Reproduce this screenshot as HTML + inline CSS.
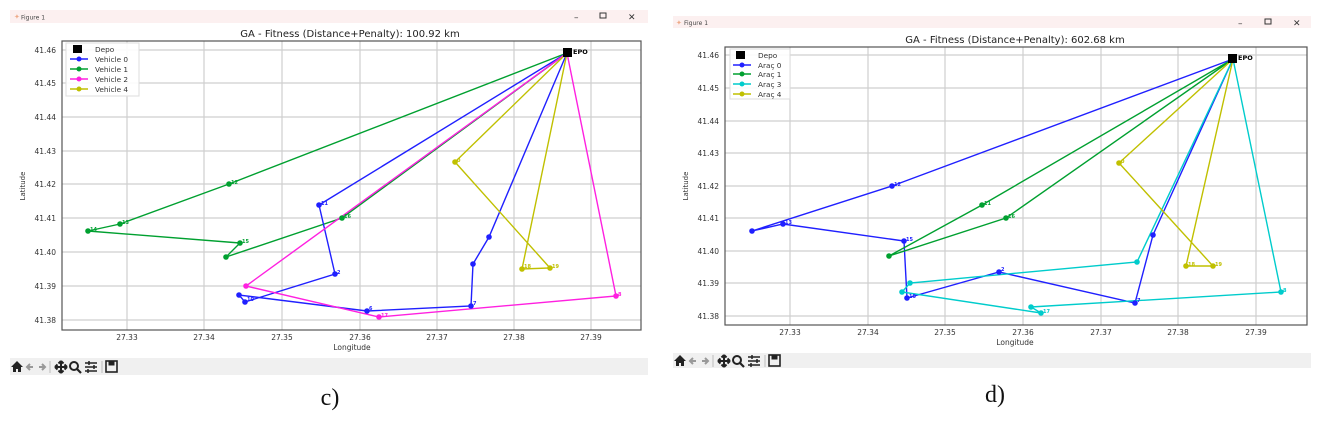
<!DOCTYPE html>
<html><head><meta charset="utf-8"><style>
html,body{margin:0;padding:0;background:#fff;}
svg{display:block;font-family:"DejaVu Sans","Liberation Sans",sans-serif;}
</style></head><body>
<svg width="1321" height="421" viewBox="0 0 1321 421" xmlns="http://www.w3.org/2000/svg">
<defs>
<g id="tb">
 <path d="M0 8 L6 2 L12 8 L10 8 L10 13 L7 13 L7 10 L5 10 L5 13 L2 13 L2 8Z" fill="#222"/>
 <path d="M22 8 L16 8 M19 5 L16 8 L19 11" stroke="#999" stroke-width="2" fill="none"/>
 <path d="M28 8 L34 8 M31 5 L34 8 L31 11" stroke="#999" stroke-width="2" fill="none"/>
 <line x1="39" y1="2" x2="39" y2="14" stroke="#bbb"/>
 <path d="M44 8 H56 M50 2 V14 M44 8 l2.5 -2.5 M44 8 l2.5 2.5 M56 8 l-2.5 -2.5 M56 8 l-2.5 2.5 M50 2 l-2.5 2.5 M50 2 l2.5 2.5 M50 14 l-2.5 -2.5 M50 14 l2.5 -2.5" stroke="#222" stroke-width="2" fill="none"/>
 <circle cx="63" cy="7" r="4" stroke="#222" stroke-width="2" fill="none"/>
 <line x1="66" y1="10" x2="70" y2="14" stroke="#222" stroke-width="2.2"/>
 <path d="M74 4 H86 M74 8 H86 M74 12 H86" stroke="#222" stroke-width="1.5"/>
 <path d="M78 2 V6 M83 6 V10 M77 10 V14" stroke="#222" stroke-width="1.5"/>
 <line x1="91" y1="2" x2="91" y2="14" stroke="#bbb"/>
 <rect x="95" y="2" width="11" height="11" fill="none" stroke="#222" stroke-width="1.6"/>
 <rect x="97.5" y="2.5" width="6" height="4" fill="#222"/>
</g>
</defs>

<!-- ================= LEFT PANEL ================= -->
<rect x="10" y="10" width="638" height="13" fill="#fcf0f0"/>
<text x="14" y="19" font-size="7" fill="#ea8">✦</text>
<text x="21" y="19.5" font-size="6" fill="#444">Figure 1</text>
<text x="574" y="20" font-size="9" fill="#333">–</text>
<rect x="600" y="13" width="6" height="5" fill="none" stroke="#333"/>
<text x="628" y="20" font-size="9" fill="#333">✕</text>

<text x="350" y="37" font-size="10" text-anchor="middle" fill="#222">GA - Fitness (Distance+Penalty): 100.92 km</text>
<g stroke="#cfcfcf" stroke-width="1.2">
 <line x1="127" y1="41" x2="127" y2="330"/><line x1="204" y1="41" x2="204" y2="330"/><line x1="282" y1="41" x2="282" y2="330"/><line x1="360" y1="41" x2="360" y2="330"/><line x1="437" y1="41" x2="437" y2="330"/><line x1="514" y1="41" x2="514" y2="330"/><line x1="591" y1="41" x2="591" y2="330"/>
 <line x1="62" y1="50" x2="641" y2="50"/><line x1="62" y1="83" x2="641" y2="83"/><line x1="62" y1="117" x2="641" y2="117"/><line x1="62" y1="151" x2="641" y2="151"/><line x1="62" y1="184" x2="641" y2="184"/><line x1="62" y1="218" x2="641" y2="218"/><line x1="62" y1="252" x2="641" y2="252"/><line x1="62" y1="286" x2="641" y2="286"/><line x1="62" y1="320" x2="641" y2="320"/>
</g>
<rect x="62" y="41" width="579" height="289" fill="none" stroke="#555" stroke-width="1.2"/>
<g font-size="7.5" fill="#333" text-anchor="end">
 <text x="56" y="53">41.46</text><text x="56" y="86">41.45</text><text x="56" y="120">41.44</text><text x="56" y="154">41.43</text><text x="56" y="187">41.42</text><text x="56" y="221">41.41</text><text x="56" y="255">41.40</text><text x="56" y="289">41.39</text><text x="56" y="323">41.38</text>
</g>
<g font-size="7.5" fill="#333" text-anchor="middle">
 <text x="127" y="340">27.33</text><text x="204" y="340">27.34</text><text x="282" y="340">27.35</text><text x="360" y="340">27.36</text><text x="437" y="340">27.37</text><text x="514" y="340">27.38</text><text x="591" y="340">27.39</text>
 <text x="352" y="350">Longitude</text>
</g>
<text transform="translate(25,186) rotate(-90)" font-size="7" fill="#333" text-anchor="middle">Latitude</text>

<g fill="none" stroke-width="1.4">
 <polyline stroke="#00a030" points="567,53 229,184 120,224 88,231 240,243 226,257 342,218 567,53"/>
 <polyline stroke="#2020ff" points="567,53 319,205 335,274 245,302 239,295 367,311 471,306 473,264 489,237 567,53"/>
 <polyline stroke="#ff20e0" points="567,53 246,286 379,317 616,296 567,53"/>
 <polyline stroke="#c0c000" points="567,53 455,162 550,268 522,269 567,53"/>
</g>
<g stroke="none">
 <g fill="#00a030"><circle cx="229" cy="184" r="2.8"/><circle cx="120" cy="224" r="2.8"/><circle cx="88" cy="231" r="2.8"/><circle cx="240" cy="243" r="2.8"/><circle cx="226" cy="257" r="2.8"/><circle cx="342" cy="218" r="2.8"/></g>
 <g fill="#2020ff"><circle cx="319" cy="205" r="2.8"/><circle cx="335" cy="274" r="2.8"/><circle cx="245" cy="302" r="2.8"/><circle cx="239" cy="295" r="2.8"/><circle cx="367" cy="311" r="2.8"/><circle cx="471" cy="306" r="2.8"/><circle cx="473" cy="264" r="2.8"/><circle cx="489" cy="237" r="2.8"/></g>
 <g fill="#ff20e0"><circle cx="246" cy="286" r="2.8"/><circle cx="379" cy="317" r="2.8"/><circle cx="616" cy="296" r="2.8"/></g>
 <g fill="#c0c000"><circle cx="455" cy="162" r="2.8"/><circle cx="550" cy="268" r="2.8"/><circle cx="522" cy="269" r="2.8"/></g>
</g>
<g font-size="5" font-weight="bold">
 <g fill="#00a030"><text x="231" y="184">12</text><text x="122" y="224">13</text><text x="90" y="231">14</text><text x="242" y="243">15</text><text x="344" y="218">16</text></g>
 <g fill="#2020ff"><text x="321" y="205">11</text><text x="337" y="274">2</text><text x="247" y="301">10</text><text x="369" y="310">6</text><text x="473" y="305">7</text></g>
 <g fill="#ff20e0"><text x="381" y="317">17</text><text x="618" y="296">8</text></g>
 <g fill="#c0c000"><text x="457" y="162">0</text><text x="552" y="268">19</text><text x="524" y="268">18</text></g>
</g>
<rect x="563" y="48" width="9" height="9" fill="#000"/>
<text x="573" y="54" font-size="6.5" font-weight="bold" fill="#000">EPO</text>
<rect x="66" y="43" width="73" height="53" fill="#fff" fill-opacity="0.9" stroke="#ddd"/>
<rect x="73" y="45" width="9" height="8" fill="#000"/>
<g font-size="7.3" fill="#333"><text x="95" y="52">Depo</text><text x="95" y="62">Vehicle 0</text><text x="95" y="72">Vehicle 1</text><text x="95" y="82">Vehicle 2</text><text x="95" y="92">Vehicle 4</text></g>
<g stroke-width="1.4"><line x1="70" y1="59" x2="88" y2="59" stroke="#2020ff"/><line x1="70" y1="69" x2="88" y2="69" stroke="#00a030"/><line x1="70" y1="79" x2="88" y2="79" stroke="#ff20e0"/><line x1="70" y1="89" x2="88" y2="89" stroke="#c0c000"/></g>
<circle cx="79" cy="59" r="2.5" fill="#2020ff"/><circle cx="79" cy="69" r="2.5" fill="#00a030"/><circle cx="79" cy="79" r="2.5" fill="#ff20e0"/><circle cx="79" cy="89" r="2.5" fill="#c0c000"/>

<rect x="10" y="358" width="638" height="17" fill="#f0f0f0"/>
<use href="#tb" x="11" y="359"/>
<text x="330" y="405" font-size="24" font-family="Liberation Serif,serif" text-anchor="middle" fill="#111">c)</text>

<!-- ================= RIGHT PANEL ================= -->
<rect x="673" y="16" width="638" height="12" fill="#fcf0f0"/>
<text x="676" y="25" font-size="7" fill="#ea8">✦</text>
<text x="684" y="25" font-size="6" fill="#444">Figure 1</text>
<text x="1238" y="26" font-size="9" fill="#333">–</text>
<rect x="1265" y="19" width="6" height="5" fill="none" stroke="#333"/>
<text x="1293" y="26" font-size="9" fill="#333">✕</text>

<text x="1015" y="43" font-size="10" text-anchor="middle" fill="#222">GA - Fitness (Distance+Penalty): 602.68 km</text>
<g stroke="#cfcfcf" stroke-width="1.2">
 <line x1="790" y1="47" x2="790" y2="325"/><line x1="868" y1="47" x2="868" y2="325"/><line x1="945" y1="47" x2="945" y2="325"/><line x1="1023" y1="47" x2="1023" y2="325"/><line x1="1101" y1="47" x2="1101" y2="325"/><line x1="1178" y1="47" x2="1178" y2="325"/><line x1="1256" y1="47" x2="1256" y2="325"/>
 <line x1="725" y1="55" x2="1307" y2="55"/><line x1="725" y1="88" x2="1307" y2="88"/><line x1="725" y1="121" x2="1307" y2="121"/><line x1="725" y1="153" x2="1307" y2="153"/><line x1="725" y1="186" x2="1307" y2="186"/><line x1="725" y1="218" x2="1307" y2="218"/><line x1="725" y1="251" x2="1307" y2="251"/><line x1="725" y1="283" x2="1307" y2="283"/><line x1="725" y1="316" x2="1307" y2="316"/>
</g>
<rect x="725" y="47" width="582" height="278" fill="none" stroke="#555" stroke-width="1.2"/>
<g font-size="7.5" fill="#333" text-anchor="end">
 <text x="719" y="58">41.46</text><text x="719" y="91">41.45</text><text x="719" y="124">41.44</text><text x="719" y="156">41.43</text><text x="719" y="189">41.42</text><text x="719" y="221">41.41</text><text x="719" y="254">41.40</text><text x="719" y="286">41.39</text><text x="719" y="319">41.38</text>
</g>
<g font-size="7.5" fill="#333" text-anchor="middle">
 <text x="790" y="335">27.33</text><text x="868" y="335">27.34</text><text x="945" y="335">27.35</text><text x="1023" y="335">27.36</text><text x="1101" y="335">27.37</text><text x="1178" y="335">27.38</text><text x="1256" y="335">27.39</text>
 <text x="1015" y="345">Longitude</text>
</g>
<text transform="translate(688,186) rotate(-90)" font-size="7" fill="#333" text-anchor="middle">Latitude</text>

<g fill="none" stroke-width="1.4">
 <polyline stroke="#2020ff" points="1233,59 892,186 752,231 783,224 904,241 907,298 999,272 1135,303 1153,235 1233,59"/>
 <polyline stroke="#00a030" points="1233,59 982,205 889,256 1006,218 1233,59"/>
 <polyline stroke="#00cccc" points="1233,59 1137,262 910,283 902,292 1041,313 1031,307 1281,292 1233,59"/>
 <polyline stroke="#c0c000" points="1233,59 1119,163 1213,266 1186,266 1233,59"/>
</g>
<g stroke="none">
 <g fill="#2020ff"><circle cx="892" cy="186" r="2.8"/><circle cx="752" cy="231" r="2.8"/><circle cx="783" cy="224" r="2.8"/><circle cx="904" cy="241" r="2.8"/><circle cx="907" cy="298" r="2.8"/><circle cx="999" cy="272" r="2.8"/><circle cx="1135" cy="303" r="2.8"/><circle cx="1153" cy="235" r="2.8"/></g>
 <g fill="#00a030"><circle cx="982" cy="205" r="2.8"/><circle cx="889" cy="256" r="2.8"/><circle cx="1006" cy="218" r="2.8"/></g>
 <g fill="#00cccc"><circle cx="1137" cy="262" r="2.8"/><circle cx="910" cy="283" r="2.8"/><circle cx="902" cy="292" r="2.8"/><circle cx="1041" cy="313" r="2.8"/><circle cx="1031" cy="307" r="2.8"/><circle cx="1281" cy="292" r="2.8"/></g>
 <g fill="#c0c000"><circle cx="1119" cy="163" r="2.8"/><circle cx="1213" cy="266" r="2.8"/><circle cx="1186" cy="266" r="2.8"/></g>
</g>
<g font-size="5" font-weight="bold">
 <g fill="#2020ff"><text x="894" y="186">12</text><text x="785" y="224">13</text><text x="906" y="241">15</text><text x="909" y="298">10</text><text x="1001" y="271">2</text><text x="1137" y="302">7</text></g>
 <g fill="#00a030"><text x="984" y="205">11</text><text x="1008" y="218">16</text></g>
 <g fill="#00cccc"><text x="1043" y="313">17</text><text x="1283" y="292">8</text></g>
 <g fill="#c0c000"><text x="1121" y="163">0</text><text x="1215" y="266">19</text><text x="1188" y="266">18</text></g>
</g>
<rect x="1228" y="54" width="9" height="9" fill="#000"/>
<text x="1238" y="60" font-size="6.5" font-weight="bold" fill="#000">EPO</text>
<rect x="730" y="49" width="60" height="50" fill="#fff" fill-opacity="0.9" stroke="#ddd"/>
<rect x="736" y="51" width="9" height="8" fill="#000"/>
<g font-size="7.3" fill="#333"><text x="758" y="58">Depo</text><text x="758" y="68">Araç 0</text><text x="758" y="77">Araç 1</text><text x="758" y="87">Araç 3</text><text x="758" y="97">Araç 4</text></g>
<g stroke-width="1.4"><line x1="733" y1="65" x2="751" y2="65" stroke="#2020ff"/><line x1="733" y1="74" x2="751" y2="74" stroke="#00a030"/><line x1="733" y1="84" x2="751" y2="84" stroke="#00cccc"/><line x1="733" y1="94" x2="751" y2="94" stroke="#c0c000"/></g>
<circle cx="742" cy="65" r="2.5" fill="#2020ff"/><circle cx="742" cy="74" r="2.5" fill="#00a030"/><circle cx="742" cy="84" r="2.5" fill="#00cccc"/><circle cx="742" cy="94" r="2.5" fill="#c0c000"/>

<rect x="673" y="353" width="638" height="15" fill="#f0f0f0"/>
<use href="#tb" x="674" y="353"/>
<text x="995" y="402" font-size="24" font-family="Liberation Serif,serif" text-anchor="middle" fill="#111">d)</text>
</svg>
</body></html>
